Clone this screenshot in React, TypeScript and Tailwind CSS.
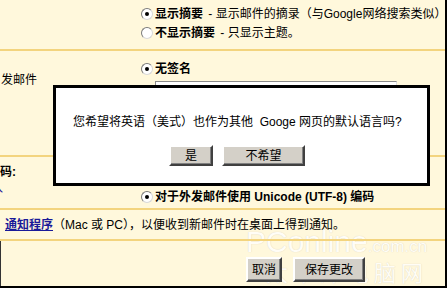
import React from "react";

function Radio({ checked }: { checked?: boolean }) {
  return (
    <span className="inline-flex h-[12px] w-[12px] shrink-0 items-center justify-center rounded-full border border-t-[#7a7a7a] border-l-[#7a7a7a] border-b-[#d8d8d8] border-r-[#d8d8d8] bg-white">
      {checked ? <span className="block h-[4px] w-[4px] rounded-full bg-black" /> : null}
    </span>
  );
}

function WinButton({ children, className }: { children: React.ReactNode; className?: string }) {
  return (
    <div
      className={
        "flex items-center justify-center border-2 border-t-white border-l-white border-b-[#404040] border-r-[#404040] bg-[#d4d0c8] shadow-[inset_-1px_-1px_0_#808080] text-[12px] leading-none text-black " +
        (className ?? "")
      }
    >
      {children}
    </div>
  );
}

function Line() {
  return <div className="h-[2px] w-full bg-[#f3d47e]" />;
}

export default function App() {
  return (
    <div className="relative h-[288px] w-[447px] overflow-hidden bg-[#fff8dc] font-['Liberation_Sans','Noto_Sans_CJK_SC',sans-serif] text-[12px] leading-[16px] text-black">
      {/* Watermark (behind content) */}
      <div className="pointer-events-none absolute left-[246px] top-[226px] flex flex-col text-[#fffdf6]">
        <div className="flex items-baseline whitespace-nowrap font-['Liberation_Sans',sans-serif] [text-shadow:0_0_1px_#d6ceb6]">
          <span className="text-[30px] leading-[32px]">PConline</span>
          <span className="text-[17px] leading-[20px]">.com.cn</span>
        </div>
        <div className="ml-[20px] whitespace-nowrap font-['Noto_Sans_CJK_SC',sans-serif] text-[22px] leading-[26px] tracking-[5px] [text-shadow:0_0_1px_#d6ceb6]">
          太平洋电脑网
        </div>
      </div>

      <div className="relative flex h-full w-full flex-col border-b-2 border-r-2 border-black">
        {/* Section A */}
        <div className="flex h-[49px] flex-col gap-[3px] pl-[141px] pt-[6px]">
          <div className="flex items-center gap-[2px] whitespace-nowrap">
            <Radio checked />
            <span className="font-bold">显示摘要</span>
            <span>&nbsp;-&nbsp;显示邮件的摘录（与Google网络搜索类似）</span>
          </div>
          <div className="flex items-center gap-[2px] whitespace-nowrap">
            <Radio />
            <span className="font-bold">不显示摘要</span>
            <span>&nbsp;-&nbsp;只显示主题。</span>
          </div>
        </div>
        <Line />
        {/* Section B */}
        <div className="flex h-[104px]">
          <div className="w-[141px] pl-[1px] pt-[21px]">发邮件</div>
          <div className="flex flex-col pt-[10px]">
            <div className="flex items-center gap-[2px] whitespace-nowrap">
              <Radio checked />
              <span className="font-bold">无签名</span>
            </div>
            <div className="mt-[4px] flex items-start gap-[2px]">
              <div className="mt-[4px]">
                <Radio />
              </div>
              <div className="h-[40px] w-[242px] border border-t-[#8a8a8a] border-l-[#8a8a8a] border-b-[#e0e0e0] border-r-[#e0e0e0] bg-white" />
            </div>
          </div>
        </div>
        <Line />
        {/* Section C */}
        <div className="flex h-[51px]">
          <div className="flex w-[141px] flex-col overflow-hidden pt-[7px]">
            <span className="font-bold">码:</span>
            <span className="-ml-[9px] text-[#1a1a99]">入</span>
          </div>
          <div className="flex items-end pb-[3px]">
            <div className="flex items-center gap-[2px] whitespace-nowrap">
              <Radio checked />
              <span className="font-bold">对于外发邮件使用 Unicode (UTF-8) 编码</span>
            </div>
          </div>
        </div>
        <Line />
        {/* Section D */}
        <div className="flex h-[29px] items-center whitespace-nowrap pl-[5px]">
          <span className="font-bold text-[#1a1a99] underline">通知程序</span>
          <span>（Mac 或 PC），以便收到新邮件时在桌面上得到通知。</span>
        </div>
        <Line />
        {/* Section E */}
        <div className="flex flex-1 justify-start border-l border-[#333] pl-[245px] pt-[16px]">
          <div className="flex gap-[11px]">
            <WinButton className="h-[25px] w-[36px]">取消</WinButton>
            <WinButton className="h-[25px] w-[72px]">保存更改</WinButton>
          </div>
        </div>
      </div>

      {/* Dialog */}
      <div className="absolute left-[53px] top-[85px] flex h-[101px] w-[377px] flex-col border-[3px] border-black bg-white pl-[17px] pt-[26px]">
        <div className="whitespace-nowrap">您希望将英语（美式）也作为其他&nbsp; Googe 网页的默认语言吗?</div>
        <div className="ml-[96px] mt-[15px] flex gap-[9px]">
          <WinButton className="h-[21px] w-[44px]">是</WinButton>
          <WinButton className="h-[21px] w-[83px]">不希望</WinButton>
        </div>
      </div>
    </div>
  );
}
